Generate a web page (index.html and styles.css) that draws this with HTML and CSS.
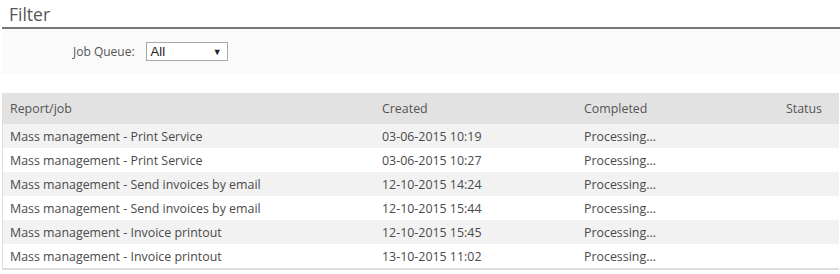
FILE: index.html
```html
<!DOCTYPE html>
<html lang="en">

<head>
  <meta charset="UTF-8">
  <title>Jobs</title>
  <link rel="stylesheet" href="styles.css">
</head>

<body>

  <div class="filter">
    <h2 class="filter-title">Filter</h2>
    <div class="filter-panel">
      <label class="filter-label" for="queue">Job Queue:</label>
      <div class="select" id="queue">
        <span>All</span>
        <span class="caret">&#9660;</span>
      </div>
    </div>
  </div>

  <div class="jobs">
    <div class="jobs-row jobs-head">
      <div>Report/job</div>
      <div>Created</div>
      <div>Completed</div>
      <div>Status</div>
    </div>
    <div class="jobs-row">
      <div>Mass management - Print Service</div>
      <div>03-06-2015 10:19</div>
      <div>Processing...</div>
      <div></div>
    </div>
    <div class="jobs-row">
      <div>Mass management - Print Service</div>
      <div>03-06-2015 10:27</div>
      <div>Processing...</div>
      <div></div>
    </div>
    <div class="jobs-row">
      <div>Mass management - Send invoices by email</div>
      <div>12-10-2015 14:24</div>
      <div>Processing...</div>
      <div></div>
    </div>
    <div class="jobs-row">
      <div>Mass management - Send invoices by email</div>
      <div>12-10-2015 15:44</div>
      <div>Processing...</div>
      <div></div>
    </div>
    <div class="jobs-row">
      <div>Mass management - Invoice printout</div>
      <div>12-10-2015 15:45</div>
      <div>Processing...</div>
      <div></div>
    </div>
    <div class="jobs-row">
      <div>Mass management - Invoice printout</div>
      <div>13-10-2015 11:02</div>
      <div>Processing...</div>
      <div></div>
    </div>
  </div>

</body>

</html>
```

FILE: styles.css
```css
* {
  box-sizing: border-box;
  margin: 0;
  padding: 0;
}

body {
  font-family: 'Open Sans', 'Noto Sans', sans-serif;
  color: #4a4a4a;
  background: white;
  padding: 2px 0 0 2px;
  width: 840px;
}

.filter-title {
  font-size: 17.5px;
  font-weight: 400;
  color: #555;
  padding-left: 7px;
  line-height: 25px;
  border-bottom: 2px solid #777;
}

.filter-panel {
  background: #fafafa;
  height: 45px;
  display: flex;
  align-items: center;
  padding-left: 71px;
  gap: 11px;
}

.filter-label {
  font-size: 12px;
  color: #555;
}

.select {
  width: 82px;
  height: 19px;
  border: 1px solid #a9a9a9;
  background: white;
  display: flex;
  align-items: center;
  justify-content: space-between;
  padding: 0 5px 0 4px;
  font-family: 'Liberation Sans', Arial, sans-serif;
  font-size: 13px;
  color: #222;
}

.select .caret {
  font-size: 9px;
}

.jobs {
  margin-top: 19px;
  width: 837px;
  border-left: 1px solid #ddd;
  border-bottom: 2px solid #ddd;
}

.jobs-row {
  display: grid;
  grid-template-columns: 372px 202px 201px 1fr;
  height: 24px;
  align-items: center;
  font-size: 12.4px;
}

.jobs-row div {
  padding-left: 7px;
  white-space: nowrap;
}

.jobs-row:nth-child(even) {
  background: #f2f2f2;
}

.jobs-head {
  background: #e2e2e2;
  height: 31px;
  color: #555;
}

.jobs-head div:last-child {
  padding-left: 8px;
}
```
